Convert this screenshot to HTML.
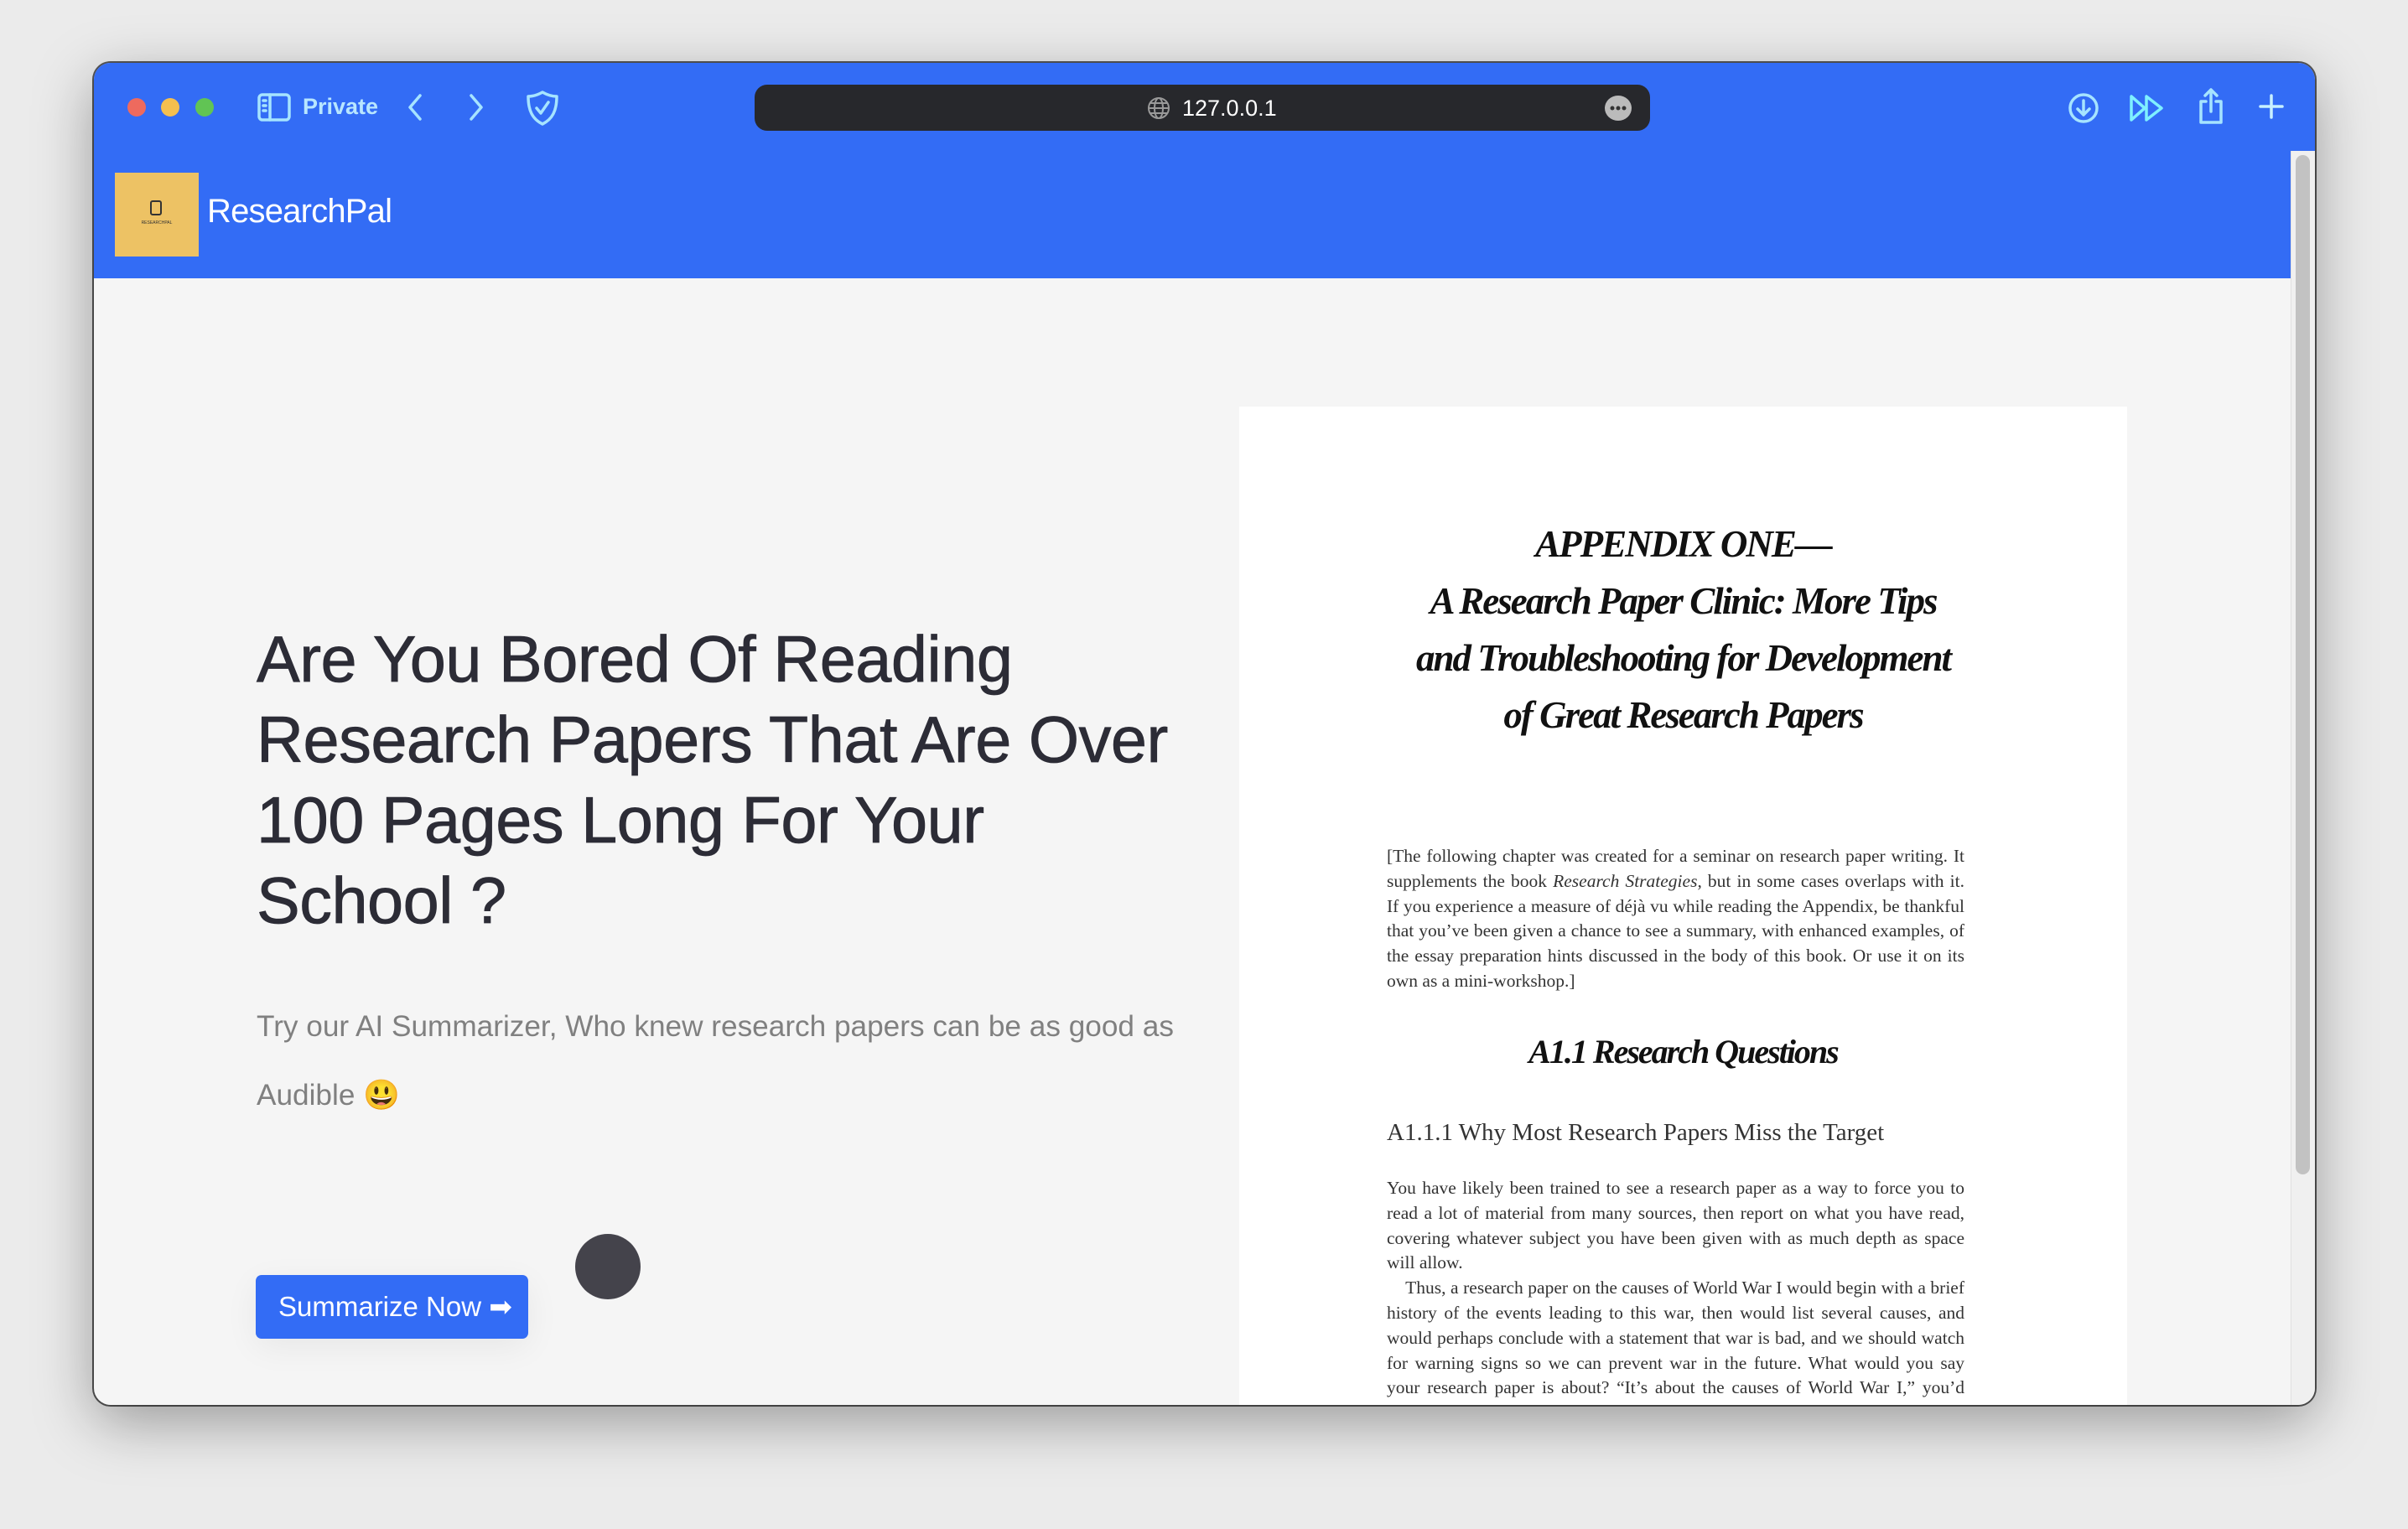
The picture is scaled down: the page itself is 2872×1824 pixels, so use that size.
<!DOCTYPE html>
<html><head><meta charset="utf-8">
<style>
*{margin:0;padding:0;box-sizing:border-box}
body{width:2872px;height:1824px;background:#ebebeb;position:relative;overflow:hidden;font-family:"Liberation Sans",sans-serif}
.win{position:absolute;left:112px;top:75px;width:2649px;height:1601px;border-radius:20px;overflow:hidden;background:#f5f5f5;box-shadow:0 20px 70px rgba(0,0,0,.35),0 0 0 2px #555}
.blue{position:absolute;left:0;top:0;width:100%;height:257px;background:#336cf5}
.abs{position:absolute}
.dot{position:absolute;width:22px;height:22px;border-radius:50%;top:42px}
.ic{position:absolute;stroke:#a6e4ff;fill:none;stroke-width:3.5;stroke-linecap:round;stroke-linejoin:round}
.h1{position:absolute;left:194px;top:664px;font-size:77.5px;line-height:96px;color:#2c2c36;letter-spacing:-0.5px;white-space:nowrap;-webkit-text-stroke:0.8px #2c2c36}
.sub{position:absolute;left:194px;top:1109px;font-size:35.2px;line-height:82px;color:#808080;white-space:nowrap}
.btn{position:absolute;left:193px;top:1446px;width:325px;height:76px;background:#336cf5;border-radius:7px;color:#fff;font-size:33px;line-height:76px;padding-left:27px;box-shadow:0 10px 40px rgba(0,0,0,.06)}
.doc{position:absolute;left:1366px;top:410px;width:1059px;height:1300px;background:#fff;font-family:"Liberation Serif",serif;color:#222}
.t{position:absolute;left:0;width:100%;text-align:center;font-style:italic;font-weight:bold;font-size:45px;line-height:68px;top:130px;letter-spacing:-2px;color:#111}
.p{position:absolute;left:176px;width:689px;font-size:21.5px;line-height:29.8px;text-align:justify;color:#333}
</style></head><body>
<div class="win">
 <div class="blue"></div>
 <div class="dot" style="left:40px;background:#ee6a5e"></div>
 <div class="dot" style="left:80px;background:#f5bf4f"></div>
 <div class="dot" style="left:121px;background:#61c454"></div>
 <svg class="ic" style="left:195px;top:36px" width="40" height="34" viewBox="0 0 40 34"><rect x="2" y="2" width="36" height="30" rx="4"/><line x1="15" y1="2" x2="15" y2="32"/><line x1="7" y1="9" x2="10" y2="9"/><line x1="7" y1="15" x2="10" y2="15"/><line x1="7" y1="21" x2="10" y2="21"/></svg>
 <div class="abs" style="left:249px;top:37px;font-size:27px;color:#b8e6ff;font-weight:bold">Private</div>
 <svg class="ic" style="left:372px;top:36px" width="22" height="34" viewBox="0 0 22 34"><path d="M17 3 L5 17 L17 31"/></svg>
 <svg class="ic" style="left:445px;top:36px" width="22" height="34" viewBox="0 0 22 34"><path d="M5 3 L17 17 L5 31"/></svg>
 <svg class="ic" style="left:515px;top:32px" width="40" height="44" viewBox="0 0 40 44"><path d="M20 3 C27 7 32 8 37 8 C37 25 32 35 20 41 C8 35 3 25 3 8 C8 8 13 7 20 3Z"/><path d="M13 22 L18 28 L27 15"/></svg>
 <div class="abs" style="left:788px;top:26px;width:1068px;height:55px;border-radius:15px;background:#27282c"></div>
 <svg class="abs" style="left:1256px;top:40px" width="28" height="28" viewBox="0 0 28 28" fill="none" stroke="#999" stroke-width="2"><circle cx="14" cy="14" r="12"/><ellipse cx="14" cy="14" rx="5" ry="12"/><line x1="2" y1="14" x2="26" y2="14"/><line x1="4" y1="8" x2="24" y2="8"/><line x1="4" y1="20" x2="24" y2="20"/></svg>
 <div class="abs" style="left:1298px;top:39px;font-size:27px;color:#fff">127.0.0.1</div>
 <svg class="abs" style="left:1802px;top:39px" width="32" height="30" viewBox="0 0 32 30"><ellipse cx="16" cy="15" rx="16" ry="15" fill="#bbb"/><circle cx="9" cy="15" r="2.5" fill="#333"/><circle cx="16" cy="15" r="2.5" fill="#333"/><circle cx="23" cy="15" r="2.5" fill="#333"/></svg>
 <svg class="ic" style="left:2353px;top:34px" width="40" height="40" viewBox="0 0 40 40"><circle cx="20" cy="20" r="16"/><path d="M20 11 V28 M13 21 L20 28 L27 21"/></svg>
 <svg class="ic" style="left:2426px;top:34px;stroke:#7ff0ff" width="44" height="40" viewBox="0 0 44 40"><path d="M4 6 V34 L20 20Z M22 6 V34 L40 20Z"/></svg>
 <svg class="ic" style="left:2508px;top:28px" width="34" height="48" viewBox="0 0 34 48"><path d="M11 18 H5 V43 H29 V18 H23 M17 4 V30 M10 11 L17 4 L24 11"/></svg>
 <svg class="ic" style="left:2581px;top:36px;stroke:#c8f0ff" width="32" height="32" viewBox="0 0 32 32"><path d="M16 3 V29 M3 16 H29"/></svg>
 <div class="abs" style="left:25px;top:131px;width:100px;height:100px;background:#edc264"></div>
 <div class="abs" style="left:67px;top:164px;width:14px;height:18px;border:2px solid #333;border-radius:3px"></div>
 <div class="abs" style="left:25px;top:188px;width:100px;text-align:center;font-size:5px;color:#333">RESEARCHPAL</div>
 <div class="abs" style="left:135px;top:155px;font-size:40px;color:#fff;letter-spacing:-0.8px">ResearchPal</div>
 <div class="abs" style="left:2620px;top:105px;width:29px;height:1496px;background:#f0f0f0;border-left:1px solid #e0e0e0"></div>
 <div class="abs" style="left:2626px;top:110px;width:17px;height:1216px;background:#c2c2c2;border-radius:9px"></div>

 <div class="h1">Are You Bored Of Reading<br>Research Papers That Are Over<br>100 Pages Long For Your<br>School ?</div>
 <div class="sub">Try our AI Summarizer, Who knew research papers can be as good as<br>Audible 😃</div>
 <div class="btn">Summarize Now ➡</div>
 <div class="abs" style="left:574px;top:1397px;width:78px;height:78px;border-radius:50%;background:#44434b"></div>

 <div class="doc">
  <div class="t">APPENDIX ONE—<br>A Research Paper Clinic: More Tips<br>and Troubleshooting for Development<br>of Great Research Papers</div>
  <div class="p" style="top:522px">[The following chapter was created for a seminar on research paper writing. It supplements the book <i>Research Strategies</i>, but in some cases overlaps with it. If you experience a measure of déjà vu while reading the Appendix, be thankful that you’ve been given a chance to see a summary, with enhanced examples, of the essay preparation hints discussed in the body of this book. Or use it on its own as a mini-workshop.]</div>
  <div class="t" style="top:736px;font-size:40px">A1.1 Research Questions</div>
  <div class="p" style="top:852px;font-size:29px;text-align:left">A1.1.1 Why Most Research Papers Miss the Target</div>
  <div class="p" style="top:918px">You have likely been trained to see a research paper as a way to force you to read a lot of material from many sources, then report on what you have read, covering whatever subject you have been given with as much depth as space will allow.<br>&nbsp;&nbsp;&nbsp;&nbsp;Thus, a research paper on the causes of World War I would begin with a brief history of the events leading to this war, then would list several causes, and would perhaps conclude with a statement that war is bad, and we should watch for warning signs so we can prevent war in the future. What would you say your research paper is about? “It’s about the causes of World War I,” you’d probably answer, and that would be exactly what you have written.</div>
 </div>
</div>
</body></html>
